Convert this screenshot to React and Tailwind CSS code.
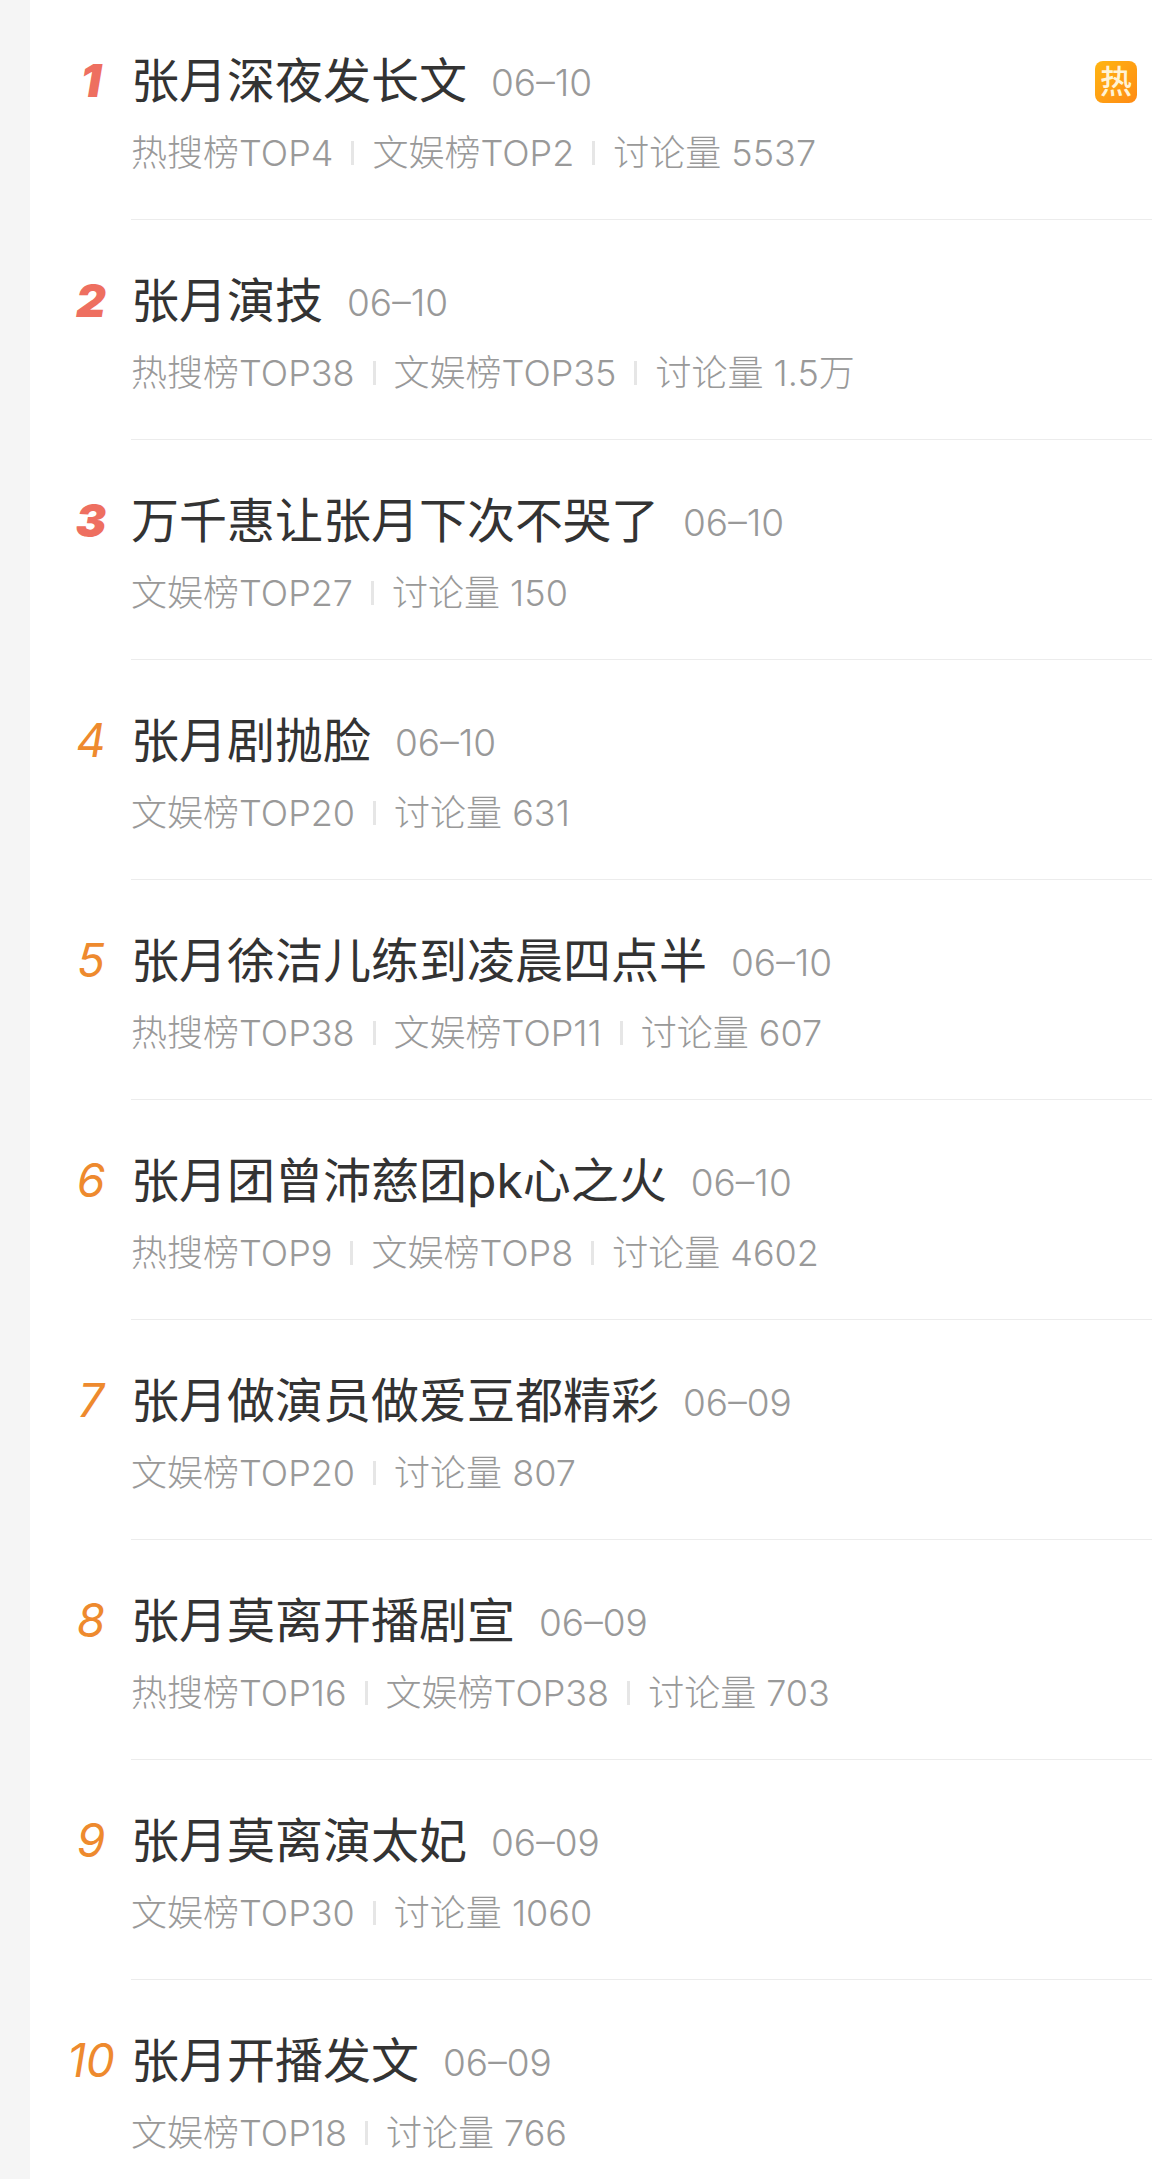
const rows = [
  { rank: 1, title: '张月深夜发长文', date: '06–10', meta: ['热搜榜TOP4', '文娱榜TOP2', '讨论量 5537'], hot: true },
  { rank: 2, title: '张月演技', date: '06–10', meta: ['热搜榜TOP38', '文娱榜TOP35', '讨论量 1.5万'] },
  { rank: 3, title: '万千惠让张月下次不哭了', date: '06–10', meta: ['文娱榜TOP27', '讨论量 150'] },
  { rank: 4, title: '张月剧抛脸', date: '06–10', meta: ['文娱榜TOP20', '讨论量 631'] },
  { rank: 5, title: '张月徐洁儿练到凌晨四点半', date: '06–10', meta: ['热搜榜TOP38', '文娱榜TOP11', '讨论量 607'] },
  { rank: 6, title: '张月团曾沛慈团pk心之火', date: '06–10', meta: ['热搜榜TOP9', '文娱榜TOP8', '讨论量 4602'] },
  { rank: 7, title: '张月做演员做爱豆都精彩', date: '06–09', meta: ['文娱榜TOP20', '讨论量 807'] },
  { rank: 8, title: '张月莫离开播剧宣', date: '06–09', meta: ['热搜榜TOP16', '文娱榜TOP38', '讨论量 703'] },
  { rank: 9, title: '张月莫离演太妃', date: '06–09', meta: ['文娱榜TOP30', '讨论量 1060'] },
  { rank: 10, title: '张月开播发文', date: '06–09', meta: ['文娱榜TOP18', '讨论量 766'] },
]

const Row = ({ item }) => {
  const top = item.rank <= 3
  return (
    <div className="flex h-[220px]">
      <div
        className={`w-[101px] shrink-0 pl-[21px] pt-[51px] text-center text-[46px] leading-[58px] italic ${
          top ? 'font-black text-[#ee6f60]' : 'font-normal text-[#ee8a2e]'
        }`}
      >
        {item.rank}
      </div>
      <div className="flex-1 border-b border-[#ececec] pr-[15px]">
        <div className="flex items-center pt-[50px]">
          <span className="text-[48px] leading-[58px] text-[#333]">{item.title}</span>
          <span className="ml-[24px] mt-[4px] text-[37px] leading-[58px] font-light text-[#999]">{item.date}</span>
          {item.hot && (
            <span className="ml-auto mt-[2px] flex h-[42px] w-[42px] items-center justify-center rounded-[8px] bg-gradient-to-br from-[#ffb511] to-[#ff8a14] text-[32px] leading-none font-medium text-[#fff3d6]">
              热
            </span>
          )}
        </div>
        <div className="mt-[16px] flex items-center text-[36px] leading-[50px] font-light text-[#999]">
          {item.meta.map((m, i) => (
            <div key={m} className="flex items-center">
              {i > 0 && <span className="mx-[18px] h-[24px] w-[3px] bg-[#e6e6e6]" />}
              <span>{m}</span>
            </div>
          ))}
        </div>
      </div>
    </div>
  )
}

export default function App() {
  return (
    <div className="flex h-[2179px] overflow-hidden bg-white font-['Inter','Noto_Sans_CJK_SC',sans-serif]">
      <div className="w-[30px] shrink-0 bg-[#f5f5f5]" />
      <div className="min-w-0 flex-1 pr-[17px]">
        {rows.map((item) => (
          <Row key={item.rank} item={item} />
        ))}
      </div>
    </div>
  )
}
